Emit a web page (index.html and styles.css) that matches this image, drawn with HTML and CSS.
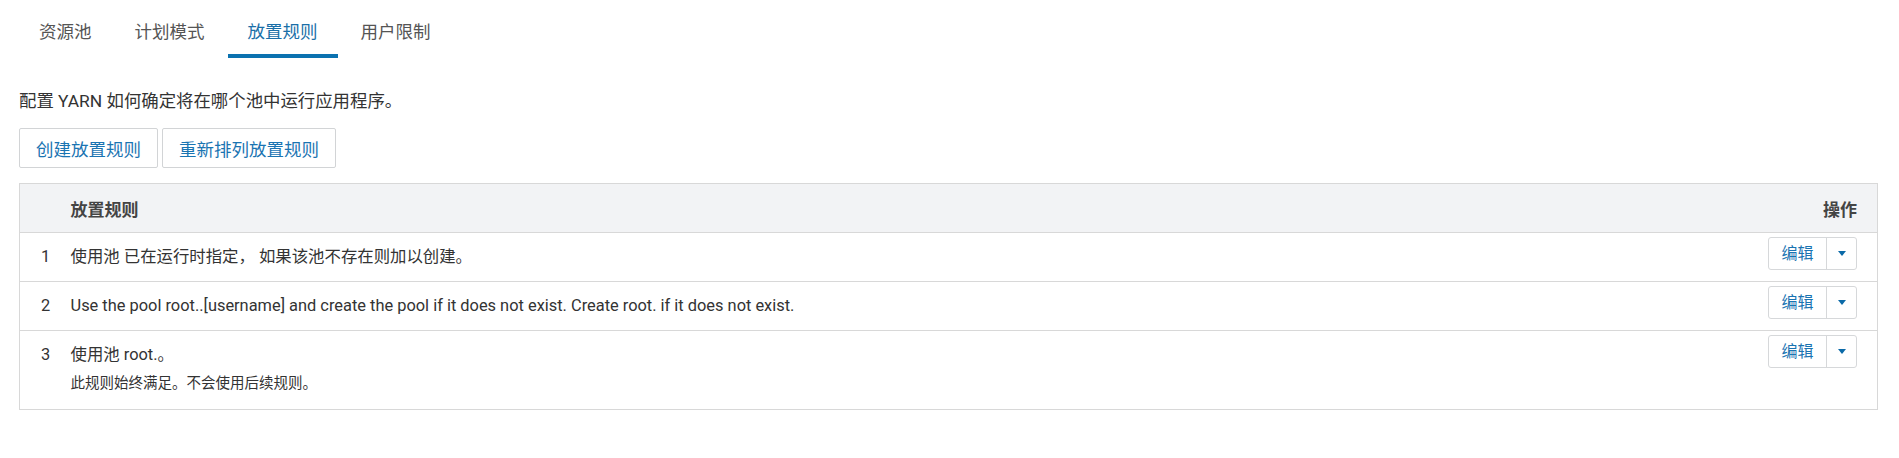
FILE: index.html
```html
<!DOCTYPE html>
<html lang="zh-CN">
<head>
<meta charset="utf-8">
<title>放置规则</title>
<link rel="stylesheet" href="styles.css">
</head>
<body>
<nav class="tabs">
  <a class="tab">资源池</a>
  <a class="tab">计划模式</a>
  <a class="tab active">放置规则</a>
  <a class="tab">用户限制</a>
</nav>
<main class="content">
  <p class="desc">配置 YARN 如何确定将在哪个池中运行应用程序。</p>
  <div class="toolbar">
    <button class="btn">创建放置规则</button>
    <button class="btn">重新排列放置规则</button>
  </div>
  <table class="rules">
    <thead>
      <tr>
        <th class="c-idx"></th>
        <th class="c-rule">放置规则</th>
        <th class="c-act">操作</th>
      </tr>
    </thead>
    <tbody>
      <tr>
        <td class="c-idx">1</td>
        <td class="c-rule">使用池 已在运行时指定， 如果该池不存在则加以创建。</td>
        <td class="c-act"><div class="split"><span class="split-main">编辑</span><span class="split-caret"><i class="caret"></i></span></div></td>
      </tr>
      <tr>
        <td class="c-idx">2</td>
        <td class="c-rule">Use the pool root..[username] and create the pool if it does not exist. Create root. if it does not exist.</td>
        <td class="c-act"><div class="split"><span class="split-main">编辑</span><span class="split-caret"><i class="caret"></i></span></div></td>
      </tr>
      <tr class="tall">
        <td class="c-idx">3</td>
        <td class="c-rule">使用池 root.。<div class="note">此规则始终满足。不会使用后续规则。</div></td>
        <td class="c-act"><div class="split"><span class="split-main">编辑</span><span class="split-caret"><i class="caret"></i></span></div></td>
      </tr>
    </tbody>
  </table>
</main>
</body>
</html>
```

FILE: styles.css
```css
* { box-sizing: border-box; }
html, body { margin: 0; background: #fff; }
body {
  font-family: Roboto, "Noto Sans CJK SC", sans-serif;
  color: #333;
}
.tabs {
  display: flex;
  gap: 3px;
  padding-left: 19px;
  height: 58px;
}
.tab {
  display: flex;
  align-items: center;
  height: 58px;
  padding: 6px 20px 0;
  border-bottom: 4px solid transparent;
  font-size: 17.5px;
  color: #555;
  cursor: pointer;
}
.tab.active {
  color: #1a6fa8;
  border-bottom-color: #0b72b0;
}
.content {
  padding: 0 21px 0 19px;
}
.desc {
  margin: 31px 0 0;
  font-size: 17.4px;
  line-height: 24px;
  color: #333;
}
.toolbar {
  display: flex;
  gap: 4px;
  margin-top: 15px;
}
.btn {
  height: 40px;
  padding: 0 16px;
  border: 1px solid #d2d4d6;
  border-radius: 2px;
  background: #fff;
  font-family: inherit;
  font-size: 17.5px;
  color: #1a74b2;
}
.rules {
  width: 100%;
  margin-top: 15px;
  border-collapse: collapse;
  border: 1px solid #d8d8d8;
  font-size: 16.4px;
}
.rules th {
  height: 49px;
  background: #f2f3f5;
  font-size: 17px;
  font-weight: bold;
  color: #444;
  text-align: left;
  border-bottom: 1px solid #d8d8d8;
  padding: 0;
}
.rules th.c-act { text-align: right; padding-right: 20px; }
.rules td {
  vertical-align: top;
  border-bottom: 1px solid #d8d8d8;
  padding: 0;
  line-height: 24px;
}
.rules tbody tr { height: 49px; }
.rules tbody tr.tall { height: 79px; }
.c-idx { width: 51px; padding-left: 21px !important; }
.rules td.c-idx, .rules td.c-rule { padding-top: 12px; }
.rules td.c-act { text-align: right; padding: 4px 20px 0 0; width: 120px; }
.note {
  margin-top: 7px;
  font-size: 14.5px;
  line-height: 20px;
  padding-bottom: 13px;
}
.split {
  display: inline-flex;
  height: 33px;
  border: 1px solid #d6d8da;
  border-radius: 3px;
  background: #fff;
}
.split-main {
  display: flex;
  align-items: center;
  justify-content: center;
  width: 58px;
  font-size: 16px;
  color: #1a74b2;
  border-right: 1px solid #d6d8da;
}
.split-caret {
  display: flex;
  align-items: center;
  justify-content: center;
  width: 29px;
}
.caret {
  display: block;
  width: 0;
  height: 0;
  border-left: 4.5px solid transparent;
  border-right: 4.5px solid transparent;
  border-top: 5px solid #0b6aa8;
}
```
